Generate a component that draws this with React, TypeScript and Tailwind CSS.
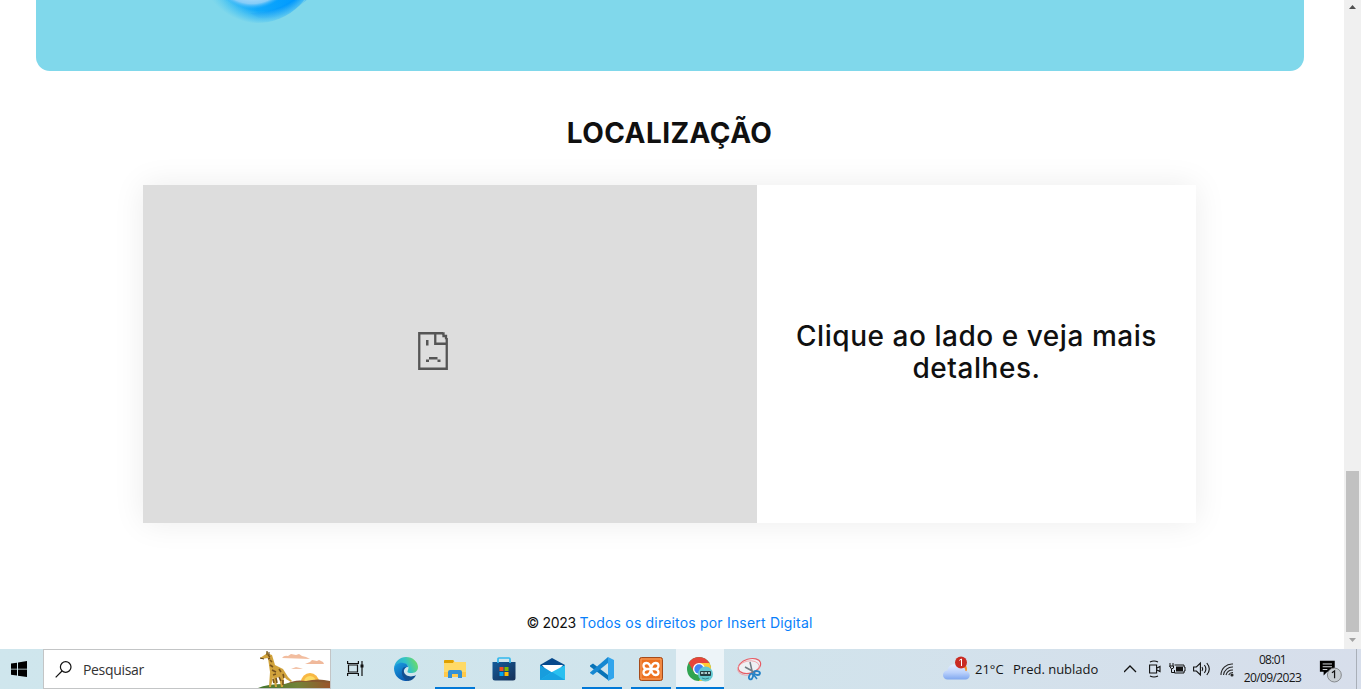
import type { ReactNode } from 'react';

function Cell({ children, active = false, open = false }: { children: ReactNode; active?: boolean; open?: boolean }) {
  return (
    <div className={`flex h-10 shrink-0 flex-col items-center ${active ? 'ml-px w-12 bg-[#edf4f8]' : 'w-[49px]'}`}>
      <div className="flex h-[38px] items-center pt-[2px]">{children}</div>
      {open && <div className={`h-0.5 bg-[#0078d7] ${active ? 'w-full' : 'w-10'}`} />}
    </div>
  );
}

function Lens() {
  return (
    <svg className="block" width="180" height="30" viewBox="180 0 180 30">
      <defs>
        <linearGradient id="ring" x1="205" x2="310" y1="0" y2="0" gradientUnits="userSpaceOnUse">
          <stop offset="0" stopColor="#75d4eb" />
          <stop offset=".2" stopColor="#45c2f3" />
          <stop offset=".5" stopColor="#10a8fb" />
          <stop offset=".85" stopColor="#009bff" />
          <stop offset="1" stopColor="#12a4fd" />
        </linearGradient>
        <radialGradient id="ringFade" cx="262" cy="-42" r="66" gradientUnits="userSpaceOnUse">
          <stop offset=".8" stopColor="#80d8eb" stopOpacity="0" />
          <stop offset="1" stopColor="#80d8eb" />
        </radialGradient>
        <radialGradient id="glass" cx="252" cy="-35" r="44" gradientUnits="userSpaceOnUse">
          <stop offset=".75" stopColor="#a9d9f8" />
          <stop offset=".88" stopColor="#84ccf8" />
          <stop offset="1" stopColor="#2cb1fb" stopOpacity="0" />
        </radialGradient>
      </defs>
      <circle cx="257" cy="-37" r="60" fill="url(#ring)" />
      <path d="M250 13Q276 14 300-5L311-4Q286 20 259 18Z" fill="#0795fa" opacity=".35" />
      <circle cx="257" cy="-37" r="61" fill="url(#ringFade)" />
      <circle cx="252" cy="-35" r="44" fill="url(#glass)" />
    </svg>
  );
}

function Giraffe() {
  return (
    <svg width="72" height="38" viewBox="0 0 72 38">
      <defs>
        <linearGradient id="hill" x1="0" x2="1">
          <stop stopColor="#42752c" /><stop offset=".55" stopColor="#728338" /><stop offset="1" stopColor="#9a542a" />
        </linearGradient>
      </defs>
      <path d="M24 8q2-3 6-2l3-2 5 1 3-1 3 2 4 1 4 2Z" fill="#f2bd9f" />
      <path d="M47 14l5-2 2-2 5 1 2-1 4 2 1 2Z" fill="#f0b99b" />
      <path d="M33 19l5-2 4 1 3 1Z" fill="#f2c3a9" />
      <circle cx="52" cy="32" r="9" fill="#f8b844" /><circle cx="52" cy="32" r="6" fill="#fcdb65" />
      <path d="M28 34q9-5 20-3 12-3 24 0v7H28Z" fill="#87572f" />
      <path d="M0 38q9-4 26-4 19-4 46-1v5Z" fill="url(#hill)" />
      <path d="M2 8l6-4 1-3 2 3 3 1 3 10 8 4 5 8 4 4-1 1-5-3-2-3-1 11h-2l-2-10-3 1 1 9h-2l-2-10-2 10h-2l1-15-2-14-7 1Z" fill="#d1a33c" />
      <path d="M10 5l2 2M12 10l2 2M12 15l3 2M14 20l4 2M21 19l2 3M15 25l3-1M25 24l1 4M15 29l1 4M21 27l2 4M25 30v5M10 9l2-1M18 28l1 5" stroke="#77531d" strokeWidth="1.6" fill="none" />
      <path d="M2 8l4 1M9 1v4M11 2v3" stroke="#594019" strokeWidth="1" />
    </svg>
  );
}

function Edge() {
  return (
    <svg width="24" height="24" viewBox="0 0 24 24">
      <defs>
        <linearGradient id="eg" x1="0" x2="1" y1=".5" y2=".2"><stop stopColor="#27a7dc" /><stop offset=".5" stopColor="#32c3c7" /><stop offset="1" stopColor="#75df58" /></linearGradient>
        <linearGradient id="eb" x1="0" x2=".6" y1="0" y2="1"><stop stopColor="#1ba1e2" /><stop offset="1" stopColor="#0759b1" /></linearGradient>
      </defs>
      <path d="M0 11C1 4 6 0 12 0c7 0 12 5 12 10 0 5-4 6-7 6-4 0-4-1-3-3 2-4-2-7-6-7-3 0-6 2-8 5Z" fill="url(#eg)" />
      <path d="M0 11c1-3 5-6 9-5 3 0 5 2 5 4-3 0-5 3-4 7 0 3 2 6 5 7C6 25 0 19 0 11Z" fill="url(#eb)" />
      <path d="M9 11c-3 5 0 11 5 13 3 0 7-3 8-6-5 3-11 1-12-3-1-2 0-3 2-5-1 0-2 0-3 1Z" fill="#124f91" />
    </svg>
  );
}

function Explorer() {
  return (
    <svg width="22" height="19" viewBox="0 0 22 19">
      <path d="M0 1q0-1 1-1h8l2 2h11v15H0Z" fill="#ffda67" /><path d="M0 3V1q0-1 1-1h8l1 1-1 2Z" fill="#dfa000" />
      <path d="M0 12h22v5H0Z" fill="#ffc94a" /><path d="M4 18v-6q0-2 2-2h10q2 0 2 2v6h-4v-4H8v4Z" fill="#3290d5" />
    </svg>
  );
}

function Store() {
  return (
    <svg width="24" height="24" viewBox="0 0 24 24">
      <defs><linearGradient id="bag" x1="0" x2="1" y1="0" y2="1"><stop stopColor="#155b9a" /><stop offset="1" stopColor="#163057" /></linearGradient></defs>
      <path d="M.5 5h23v16q0 2.5-2.5 2.5H3Q.5 23.500.5 21Z" fill="url(#bag)" />
      <path d="M6 6V2q0-1 1-1h10q1 0 1 1v4" fill="none" stroke="#32b8ed" strokeWidth="1.7" />
      <path d="M7.500 10H11.500v4H7.500Z" fill="#f25022" /><path d="M12.500 10h4v4h-4Z" fill="#7fba00" /><path d="M7.500 15H11.500v4H7.500Z" fill="#00a4ef" /><path d="M12.500 15h4v4h-4Z" fill="#ffb900" />
    </svg>
  );
}

function Mail() {
  return (
    <svg width="25" height="24" viewBox="0 0 25 24">
      <path d="M0 8l12-7 13 7v9H0Z" fill="#06498c" /><path d="M2 8h21l-8 10H10Z" fill="#fff" />
      <path d="M0 8l13 8v7H0Z" fill="#189ddd" /><path d="M25 8v15H0l12-8Z" fill="#29c0f0" /><path d="M12 15l13 8H0Z" fill="#18a3e2" />
    </svg>
  );
}

function VsCode() {
  return (
    <svg width="24" height="24" viewBox="0 0 24 24">
      <path d="M0 8.500L3 6.500l15 11.500v5L0 9.500Z" fill="#0873b7" /><path d="M0 15.500L18 0v6L3 18l-3-2Z" fill="#1688d2" />
      <path d="M18 0l6 3v18l-6 3Z" fill="#32a5ec" />
    </svg>
  );
}

function Xampp() {
  return (
    <svg width="24" height="24" viewBox="0 0 24 24">
      <rect x=".5" y=".5" width="23" height="23" rx="2" fill="#ed711f" stroke="#a54b1a" />
      <path d="M2 2h20v20H2Z" fill="none" stroke="#f4a164" strokeWidth="1" />
      <path d="M12 12q-1-6-4.500-6Q4.500 6 4.500 8.700q0 3 4 3.300-4 .5-4 3.500Q4.500 18 7.500 18q3.500 0 4.500-6Zm0 0q1-6 4.500-6 3 0 3 2.700 0 3-4 3.300 4 .5 4 3.500 0 2.500-3 2.500-3.500 0-4.500-6ZM8.500 12h7" fill="none" stroke="#fff" strokeWidth="2.300" />
    </svg>
  );
}

function Chrome() {
  return (
    <svg width="26" height="26" viewBox="0 0 26 26">
      <circle cx="12" cy="13" r="12" fill="#31a451" /><path d="M1.600 7A12 12 0 0122.400 7H12l-5 9Z" fill="#e6453a" />
      <path d="M22.400 7A12 12 0 0112 25l5-9-5-9Z" fill="#ffcd35" />
      <circle cx="12" cy="13" r="6" fill="#fff" /><circle cx="12" cy="13" r="4.700" fill="#4285f4" />
      <circle cx="18.500" cy="18" r="7.500" fill="#65c9d2" /><rect x="13" y="15" width="11" height="5" rx="1" fill="#263d43" />
      <path d="M14 17h2.500m1 0H20m1 0h2" stroke="#d6f8fa" strokeWidth="1.500" /><path d="M15 22q3 2 7 0" stroke="#37878d" fill="none" />
    </svg>
  );
}

function Snip() {
  return (
    <svg width="25" height="24" viewBox="0 0 25 24" fill="none">
      <ellipse cx="12.500" cy="9" rx="11.500" ry="7" transform="rotate(-17 12.500 9)" stroke="#e75b64" strokeWidth="1.100" fill="#eef0f4" />
      <ellipse cx="11.500" cy="11" rx="11" ry="7" transform="rotate(-12 11.500 11)" stroke="#ef9da2" strokeWidth=".8" />
      <path d="M13 5l2.500 11M8 10l10 5.500" stroke="#727c84" strokeWidth="1.500" />
      <ellipse cx="14" cy="19.500" rx="1.900" ry="3" transform="rotate(18 14 19.500)" stroke="#2482c7" strokeWidth="1.800" /><ellipse cx="20" cy="16" rx="3" ry="1.900" transform="rotate(10 20 16)" stroke="#2482c7" strokeWidth="1.800" /><path d="M16 17l4 5" stroke="#2482c7" strokeWidth="1.500" />
    </svg>
  );
}

function Weather() {
  return (
    <svg width="27" height="25" viewBox="0 0 27 25">
      <defs><linearGradient id="cloud" x1="0" x2="0" y1="0" y2="1"><stop stopColor="#e5efff" /><stop offset=".55" stopColor="#b9d0fb" /><stop offset="1" stopColor="#7fa7ef" /></linearGradient></defs>
      <circle cx="18" cy="13" r="6" fill="#f58b25" />
      <path d="M4.500 23.500a4.500 4.500 0 010-9A7 7 0 0117 11q5-1 5.500 4a4 4 0 010 8.500Z" fill="url(#cloud)" />
      <circle cx="18" cy="6.500" r="6" fill="#c92b22" /><path d="M16.300 4.400L18.500 3v7" fill="none" stroke="#fff" />
    </svg>
  );
}

function Taskbar() {
  return (
    <footer className="flex h-10 w-full bg-linear-to-r from-[#cfe6ed] via-[#d0e4ec] to-[#d7deeb] font-['Open_Sans','Noto_Sans',sans-serif] text-[13px] text-[#161616]">
      <div className="flex w-[43px] items-center pl-[11px]">
        <svg width="16" height="16" viewBox="0 0 16 16"><path d="M0 2.5l6-.8v6H0Zm7-1L16 0v7.700H7ZM0 8.500h6v6l-6-.8Zm7 0h9V16l-9-1.300Z" fill="#000" /></svg>
      </div>
      <div className="flex w-72 items-center border border-[#c3c5c6] bg-white">
        <svg className="ml-[11px]" width="17" height="17" viewBox="0 0 17 17" fill="none" stroke="#111" strokeWidth="1.2"><circle cx="10.7" cy="6" r="5.3" /><path d="M7 10L.7 16.3" /></svg>
        <span className="ml-[11px] w-[70px] pt-0.5 text-sm tracking-[-0.33px] text-[#333]">Pesquisar</span>
        <div className="ml-auto"><Giraffe /></div>
      </div>
      <div className="flex w-[50px] items-center pl-4">
        <svg className="-mt-0.5" width="17" height="17" viewBox="0 0 17 17" fill="none" stroke="#111" strokeWidth="1.2"><path d="M.6 1v2.500h10.800V1M.6 16v-2.500h10.800V16M1.500 5v7h9V5ZM15 1v15" /><path d="M13.500 4.500h3v3h-3Z" fill="#111" stroke="none" /></svg>
      </div>
      <Cell><Edge /></Cell>
      <Cell open><Explorer /></Cell>
      <Cell><Store /></Cell>
      <Cell><Mail /></Cell>
      <Cell open><VsCode /></Cell>
      <Cell open><Xampp /></Cell>
      <Cell active open><Chrome /></Cell>
      <div className="flex h-10 w-[51px] shrink-0 items-center justify-center"><Snip /></div>
      <div className="ml-auto flex h-10 w-[418px] shrink-0 items-center">
        <div className="w-8 pb-0.5"><Weather /></div>
        <span className="w-[38px] pt-px whitespace-nowrap">21°C</span>
        <span className="w-[111px] pt-px whitespace-nowrap">Pred. nublado</span>
        <svg className="w-[25px] shrink-0" height="12" viewBox="0 0 25 12"><path d="M0 9l6-6 6 6" fill="none" stroke="#111" strokeWidth="1.3" /></svg>
        <svg className="w-[20px] shrink-0" height="18" viewBox="0 0 20 18" fill="none" stroke="#111" strokeWidth="1.1"><path d="M1 2q4-2 8 0M1 16q4 2 8 0M.6 5h7v8h-7ZM8 8l3-1.500v5L8 10" /></svg>
        <svg className="w-6 shrink-0" height="12" viewBox="0 0 24 12"><path d="M7 3.500h7v5H7Z" fill="#111" /><path d="M5.500 2H15v2h1v4h-1v2H5.500V7M1 0v3M4 0v3M.5 3h4v2l-2 1ZM2.500 6v3.500h3" fill="none" stroke="#111" /></svg>
        <svg className="w-[27px] shrink-0" height="16" viewBox="0 0 27 16" fill="none" stroke="#111" strokeWidth="1.1"><path d="M.6 6h2.800l4-4v12l-4-4H.6ZM9 6q1.500 2 0 4M11.400 4q3 4 0 8M13.800 2q5 6 0 12" /></svg>
        <svg className="w-[23px] shrink-0" height="16" viewBox="0 0 23 16" fill="none" stroke="#252525" strokeWidth="1.1"><path d="M1 14A11 11 0 0113 3M3.500 14A9 9 0 0113 6M6 14a7 7 0 017-5M8.700 14A4.500 4.500 0 0113 11.500" /><circle cx="12" cy="14" r="1" fill="#111" /></svg>
        <div className="flex w-[59px] shrink-0 flex-col items-center text-xs leading-[18px] tracking-[-0.6px]"><span className="tracking-[-0.7px]">08:01</span><span>20/09/2023</span></div>
        <svg className="ml-[17px] w-[25px] shrink-0 pt-0.5" height="28" viewBox="0 0 25 28"><path d="M0 4h16v12H8l-4 4v-4H0Z" fill="#000" /><path d="M3 7.500h10M3 10.500h10M3 13.500h5" stroke="#e5e9ee" /><circle cx="15.6" cy="19.4" r="7.500" fill="#c7cdd2" stroke="#818487" /><path d="M13 17l2.800-2v8" fill="none" stroke="#111" strokeWidth="1.300" /></svg>
        <div className="mr-1 ml-auto h-full w-px bg-[#a9afb8]" />
      </div>
    </footer>
  );
}

export default function App() {
  return (
    <div className="flex h-[689px] w-[1361px] flex-col overflow-hidden bg-white">
      <div className="flex h-[649px]">
        <main className="flex w-[1344px] flex-col font-[Inter,'Liberation_Sans',sans-serif] text-[#101010]">
          <section className="ml-9 h-[71px] w-[1268px] rounded-b-[14px] bg-[#80d8eb] pl-36"><Lens /></section>
          <h1 className="mt-[44px] h-9 w-[1339px] text-center text-[28px] leading-9 font-bold tracking-[0.45px]">LOCALIZAÇÃO</h1>
          <section className="mt-[34px] ml-[143px] flex h-[338px] w-[1053px] bg-white shadow-[0_0_30px_rgba(0,0,0,0.08)]">
            <div className="flex w-[614px] bg-[#ddd] pt-[147px] pl-[275px]">
              <svg width="30" height="38" viewBox="0 0 30 38" fill="none"><path d="M25 1.250H1.250v35.500h27.500V6M17.250 1v10.750H29M24 1.500h1.500V4H28v2h1" stroke="#555" strokeWidth="2.300" /><path d="M8 8h2.500v5.500H8ZM11 25h8.500v2.500H11ZM8 27.500h3V30H8Zm11.500 0h3V30h-3Z" fill="#555" /></svg>
            </div>
            <div className="flex flex-1 items-center justify-center pb-1">
              <p className="w-[400px] text-center text-[28px] leading-8 font-medium tracking-[0.54px]">Clique ao lado e veja mais<br />detalhes.</p>
            </div>
          </section>
          <div className="mt-[89px] w-[1339px] text-center text-sm leading-[22px] tracking-[0.19px]"><span className="tracking-[-0.3px]">© 2023 </span><a className="text-[#087ffb]">Todos os direitos por Insert Digital</a></div>
        </main>
        <aside className="flex w-[17px] flex-col items-center bg-[#f0f0f0]">
          <svg className="mt-[5px] h-1 w-[7px] shrink-0" viewBox="0 0 7 4"><path d="M3.500 0L7 4H0Z" fill="#505050" /></svg>
          <div className="mt-[462px] mr-px h-[161px] w-[13px] shrink-0 bg-[#c1c1c1]" />
          <svg className="mt-1.5 h-1 w-[7px] shrink-0" viewBox="0 0 7 4"><path d="M0 0h7L3.500 4Z" fill="#a3a3a3" /></svg>
        </aside>
      </div>
      <Taskbar />
    </div>
  );
}
